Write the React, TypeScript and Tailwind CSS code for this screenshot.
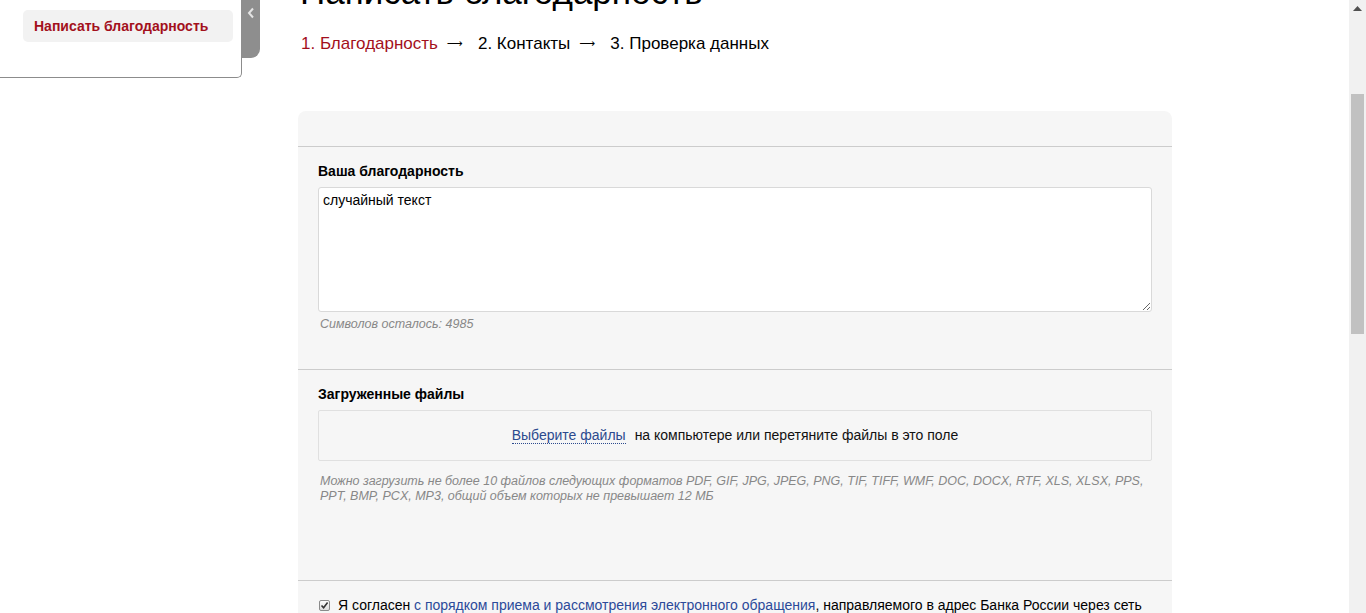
import { useState } from "react";

const font = { fontFamily: '"Liberation Sans", Arial, sans-serif' };
const arrowFont = { fontFamily: '"DejaVu Sans", sans-serif' };

function SideMenu() {
  return (
    <div className="flex w-[298px] shrink-0 items-start">
      <div className="h-[78px] w-[242px] rounded-br-[5px] border-r border-b border-[#8c8c8c] bg-white pt-[10px] pl-[23px]">
        <div className="flex h-[32px] w-[210px] items-center rounded-[5px] bg-[#f2f2f2] pl-[11px] text-[14px] font-bold text-[#a3101c]">
          Написать благодарность
        </div>
      </div>
      <div className="-ml-px flex h-[58px] w-[19px] justify-center rounded-br-[9px] bg-[#8e8e8e] pt-[7px]">
        <svg width="8" height="12" viewBox="0 0 8 12">
          <path d="M6 1.5 L2 6 L6 10.5" fill="none" stroke="#e4e4e4" strokeWidth="2" />
        </svg>
      </div>
    </div>
  );
}

function Arrow() {
  return (
    <span
      className="mr-[15px] ml-[9px] inline-flex h-[20px] w-[16px] items-center justify-center text-[11px] leading-[20px] text-black"
      style={arrowFont}
    >
      ⟶
    </span>
  );
}

function Steps() {
  return (
    <div className="mt-[24px] ml-[3px] flex h-[20px] items-center text-[17px] leading-[20px]">
      <span className="text-[#a3101c]">1. Благодарность</span>
      <Arrow />
      <span className="text-black">2. Контакты</span>
      <Arrow />
      <span className="text-black">3. Проверка данных</span>
    </div>
  );
}

function CheckMark() {
  return (
    <span className="flex h-[11px] w-[11px] items-center justify-center rounded-[2px] border border-[#8a8a8a] bg-gradient-to-b from-[#fcfcfc] to-[#dcdcdc]">
      <svg width="9" height="9" viewBox="0 0 9 9">
        <path d="M1.5 4.5 L3.6 6.8 L7.6 1.6" fill="none" stroke="#333" strokeWidth="1.6" />
      </svg>
    </span>
  );
}

export default function App() {
  const [text, setText] = useState("случайный текст");
  const left = 5000 - text.length;

  return (
    <div className="flex h-[613px] w-[1366px] overflow-hidden bg-white" style={font}>
      <div className="flex flex-1 items-start">
        <SideMenu />
        <main className="w-[874px] shrink-0">
          <h1 className="-mt-[26px] ml-[2px] text-[35px] leading-[36px] font-normal text-black">
            Написать благодарность
          </h1>
          <Steps />

          <section className="mt-[57px] rounded-t-[8px] bg-[#f6f6f6]">
            <div className="h-[36px] border-b border-[#cccccc]" />

            <div className="border-b border-[#cccccc] px-[20px] pt-[15px] pb-[37px]">
              <div className="h-[18px] text-[14px] leading-[18px] font-bold text-black">Ваша благодарность</div>
              <textarea
                value={text}
                onChange={(e) => setText(e.target.value)}
                className="mt-[7px] block h-[125px] w-full rounded-[3px] border border-[#d9d9d9] bg-white px-[4px] py-[3px] text-[14px] leading-[18px] text-black outline-none"
              />
              <div className="mt-[4px] h-[16px] pl-[2px] text-[12.5px] leading-[16px] italic text-[#888]">
                Символов осталось: {left}
              </div>
            </div>

            <div className="border-b border-[#cccccc] px-[20px] pt-[15px] pb-[76px]">
              <div className="h-[18px] text-[14px] leading-[18px] font-bold text-black">Загруженные файлы</div>
              <div className="mt-[7px] flex h-[51px] items-center justify-center gap-[9px] rounded-[2px] border border-[#e0e0e0] text-[14px] text-[#111]">
                <span className="border-b border-dotted border-[#2c4a8e] leading-[16px] text-[#2c4a8e]">Выберите файлы</span>
                <span>на компьютере или перетяните файлы в это поле</span>
              </div>
              <p className="mt-[13px] pl-[2px] text-[12.5px] leading-[15px] italic text-[#888]">
                Можно загрузить не более 10 файлов следующих форматов PDF, GIF, JPG, JPEG, PNG, TIF, TIFF, WMF, DOC, DOCX, RTF, XLS, XLSX, PPS, PPT, BMP, PCX, MP3, общий объем которых не превышает 12 МБ
              </p>
            </div>

            <div className="px-[20px] pt-[15px] pb-[20px]">
              <div className="flex items-center gap-[8px] text-[14px] leading-[18px] text-black">
                <span className="ml-[1px]">
                  <CheckMark />
                </span>
                <span className="whitespace-nowrap">
                  Я согласен <span className="text-[#2c4a9a]">с порядком приема и рассмотрения электронного обращения</span>, направляемого в адрес Банка России через сеть
                </span>
              </div>
            </div>
          </section>
        </main>
      </div>

      <div className="flex h-full w-[17px] shrink-0 flex-col items-center bg-[#f1f1f1]">
        <svg className="mt-[6px]" width="9" height="5" viewBox="0 0 9 5">
          <path d="M0 5 L4.5 0 L9 5 Z" fill="#505050" />
        </svg>
        <div className="mt-[83px] h-[240px] w-[13px] bg-[#c1c1c1]" />
      </div>
    </div>
  );
}
